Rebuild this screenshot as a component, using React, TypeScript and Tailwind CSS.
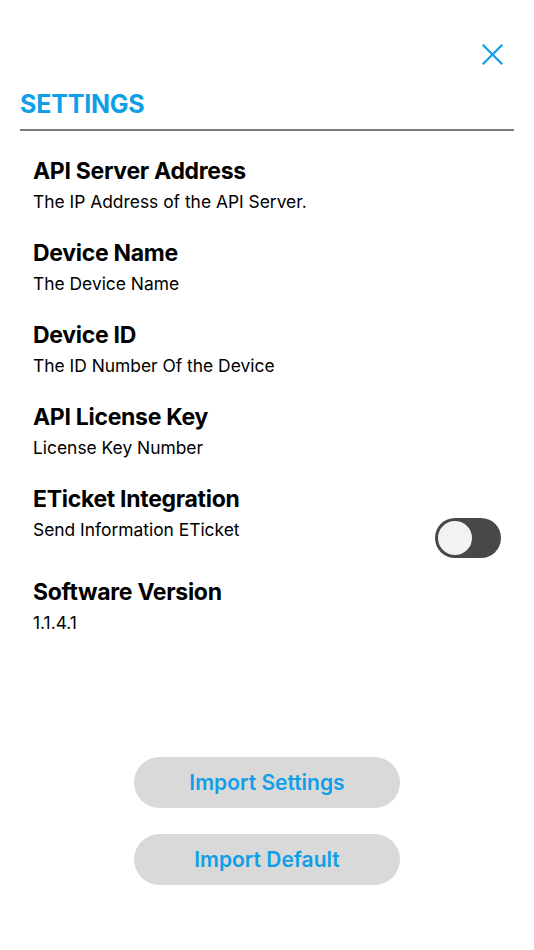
import React, { useState } from 'react';

interface SettingItem {
  title: string;
  subtitle: string;
  toggle?: boolean;
}

const items: SettingItem[] = [
  { title: 'API Server Address', subtitle: 'The IP Address of the API Server.' },
  { title: 'Device Name', subtitle: 'The Device Name' },
  { title: 'Device ID', subtitle: 'The ID Number Of the Device' },
  { title: 'API License Key', subtitle: 'License Key Number' },
  { title: 'ETicket Integration', subtitle: 'Send Information ETicket', toggle: true },
  { title: 'Software Version', subtitle: '1.1.4.1' },
];

const Toggle: React.FC<{ on: boolean; onChange: () => void }> = ({ on, onChange }) => (
  <button
    onClick={onChange}
    className={`-mb-[5px] w-[66px] h-[40px] rounded-full p-[1px] flex items-center ${
      on ? 'bg-[#109fe6] justify-end' : 'bg-[#484848] justify-start'
    }`}
  >
    <span className="block w-[38px] h-[38px] rounded-full bg-[#f2f2f2] border-[2px] border-[#484848]" />
  </button>
);

export default function App() {
  const [eticket, setEticket] = useState(false);

  return (
    <div
      className="w-[534px] h-[950px] bg-white flex flex-col"
      style={{ fontFamily: 'Inter, "Noto Sans", sans-serif' }}
    >
      {/* close button */}
      <div className="flex justify-end pt-[44px] pr-[31px]">
        <button className="w-[21px] h-[21px] flex items-center justify-center">
          <svg width="21" height="21" viewBox="0 0 21 21" fill="none">
            <path d="M1.5 1.5L19.5 19.5M19.5 1.5L1.5 19.5" stroke="#109fe6" strokeWidth="2.2" strokeLinecap="square" />
          </svg>
        </button>
      </div>

      {/* header */}
      <div className="mx-[20px] mt-[24px] pb-[10px] border-b-2 border-[#7a7a7a]">
        <h1 className="text-[25px] leading-[30px] font-bold text-[#109fe6] tracking-[-0.2px]">SETTINGS</h1>
      </div>

      {/* settings list */}
      <div className="px-[33px] pt-[26px] flex flex-col gap-[25px]">
        {items.map((item) => (
          <div key={item.title} className="flex flex-col gap-[5px]">
            <h2 className="text-[23px] leading-[28px] font-bold text-black tracking-[-0.3px]">{item.title}</h2>
            {item.toggle ? (
              <div className="flex justify-between items-start">
                <p className="text-[17.4px] leading-[24px] text-black">{item.subtitle}</p>
                <Toggle on={eticket} onChange={() => setEticket(!eticket)} />
              </div>
            ) : (
              <p className="text-[17.4px] leading-[24px] text-black">{item.subtitle}</p>
            )}
          </div>
        ))}
      </div>

      <div className="flex-1" />

      {/* bottom buttons */}
      <div className="flex flex-col items-center gap-[26px] pb-[65px]">
        <button className="w-[266px] h-[51px] rounded-full bg-[#d9d9d9] text-[21px] font-semibold text-[#109fe6]">
          Import Settings
        </button>
        <button className="w-[266px] h-[51px] rounded-full bg-[#d9d9d9] text-[21px] font-semibold text-[#109fe6]">
          Import Default
        </button>
      </div>
    </div>
  );
}
